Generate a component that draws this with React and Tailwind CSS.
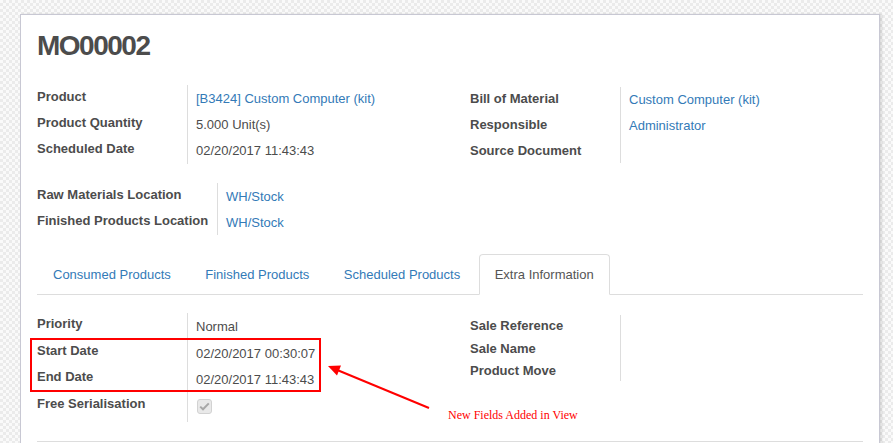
import React from "react";

const LBL = "font-bold text-[13px] leading-[18px] text-[#4c4c4c] whitespace-nowrap";
const VAL = "text-[13px] leading-[18px] text-[#4c4c4c] whitespace-nowrap";
const LINK = "text-[13px] leading-[18px] text-[#337ab7] whitespace-nowrap";

function Group({ labelW, colH, lpt, vpt, rows, className = "" }) {
  return (
    <div className={`flex ${colH} ${className}`}>
      <div className={`flex flex-col shrink-0 border-r border-[#dddddd] ${labelW} ${colH} ${lpt}`}>
        {rows.map((r, i) => (
          <div key={i} className={`shrink-0 ${r.h} ${LBL}`}>{r.label}</div>
        ))}
      </div>
      <div className={`flex flex-col pl-[8px] ${colH} ${vpt}`}>
        {rows.map((r, i) => (
          <div key={i} className={`shrink-0 ${r.h} ${r.cls || VAL}`}>{r.value}</div>
        ))}
      </div>
    </div>
  );
}

function Checkbox() {
  return (
    <div className="mt-[1px] ml-[1px] w-[15px] h-[15px] rounded-[3px] bg-[#e9e9e9] border border-[#d2d2d2] flex items-center justify-center">
      <svg width="11" height="9" viewBox="0 0 11 9">
        <path d="M1.2 4.6 L4 7.3 L9.8 1.4" fill="none" stroke="#a8a8a8" strokeWidth="2" />
      </svg>
    </div>
  );
}

function Tab({ children, active }) {
  return active ? (
    <div className="-mb-px h-[41px] px-[15px] mr-[2.5px] border border-[#dddddd] border-b-white bg-white rounded-t-[4px] flex items-center text-[13px] text-[#555555]">
      {children}
    </div>
  ) : (
    <div className="-mb-px h-[41px] px-[15px] mr-[2.5px] border border-transparent flex items-center text-[13px] text-[#337ab7]">
      {children}
    </div>
  );
}

export default function App() {
  return (
    <div
      className="relative h-[443px] w-[893px] overflow-hidden pt-[14px] pl-[20px] pr-[13px] bg-[#f7f7f7] bg-[image:repeating-conic-gradient(#ebebeb_0%_25%,#fafafa_0%_50%)] bg-[length:6px_6px]"
      style={{ fontFamily: '"Liberation Sans", Arial, sans-serif' }}
    >
      <div className="bg-white border border-[#c8c8d3] shadow-[2px_0_2px_rgba(0,0,0,0.12)] h-[600px] px-[16px] pt-[15px]">
        <h1 className="h-[32px] text-[28px] leading-[32px] font-bold tracking-[-1.5px] text-[#4c4c4c]">
          MO00002
        </h1>

        <div className="flex h-[79px] mt-[23px]">
          <div className="w-[433px]">
            <Group
              labelW="w-[151px]"
              colH="h-[79px]"
              lpt="pt-[3px]"
              vpt="pt-[5px]"
              rows={[
                { label: "Product", value: "[B3424] Custom Computer (kit)", cls: LINK, h: "h-[26px]" },
                { label: "Product Quantity", value: "5.000\u00a0Unit(s)", h: "h-[26px]" },
                { label: "Scheduled Date", value: "02/20/2017 11:43:43", h: "h-[26px]" },
              ]}
            />
          </div>
          <div className="flex-1 mt-[2px]">
            <Group
              labelW="w-[151px]"
              colH="h-[76px]"
              lpt="pt-[3px]"
              vpt="pt-[4px]"
              rows={[
                { label: "Bill of Material", value: "Custom Computer (kit)", cls: LINK, h: "h-[26px]" },
                { label: "Responsible", value: "Administrator", cls: LINK, h: "h-[26px]" },
                { label: "Source Document", value: "", h: "h-[26px]" },
              ]}
            />
          </div>
        </div>

        <Group
          className="mt-[19px]"
          labelW="w-[181px]"
          colH="h-[52px]"
          lpt="pt-[3px]"
          vpt="pt-[5px]"
          rows={[
            { label: "Raw Materials Location", value: "WH/Stock", cls: LINK, h: "h-[26px]" },
            { label: "Finished Products Location", value: "WH/Stock", cls: LINK, h: "h-[26px]" },
          ]}
        />

        <div className="mt-[19px] flex border-b border-[#dddddd] h-[41px]">
          <Tab>Consumed Products</Tab>
          <Tab>Finished Products</Tab>
          <Tab>Scheduled Products</Tab>
          <Tab active>Extra Information</Tab>
        </div>

        <div className="flex h-[109px] mt-[18px]">
          <div className="w-[433px]">
            <Group
              labelW="w-[151px]"
              colH="h-[109px]"
              lpt="pt-[2px]"
              vpt="pt-[5px]"
              rows={[
                { label: "Priority", value: "Normal", h: "h-[27px]" },
                { label: "Start Date", value: "02/20/2017 00:30:07", h: "h-[26px]" },
                { label: "End Date", value: "02/20/2017 11:43:43", h: "h-[27px]" },
                { label: "Free Serialisation", value: <Checkbox />, h: "h-[27px]" },
              ]}
            />
          </div>
          <div className="flex-1 mt-[2px]">
            <Group
              labelW="w-[151px]"
              colH="h-[66px]"
              lpt="pt-[2px]"
              vpt="pt-[2px]"
              rows={[
                { label: "Sale Reference", value: "", h: "h-[23px]" },
                { label: "Sale Name", value: "", h: "h-[22px]" },
                { label: "Product Move", value: "", h: "h-[22px]" },
              ]}
            />
          </div>
        </div>

        <div className="mt-[19px] border-t border-[#dddddd]" />
      </div>

      {/* annotation overlay */}
      <div className="absolute left-[30px] top-[338px] w-[291px] h-[54px] border-2 border-[#ff0000]" />
      <svg className="absolute left-0 top-0 pointer-events-none" width="893" height="443">
        <line x1="429" y1="408" x2="336" y2="369.5" stroke="#ff0000" strokeWidth="2" />
        <polygon points="328,366 341,365.6 337,375.4" fill="#ff0000" />
      </svg>
      <div
        className="absolute left-[448px] top-[407px] text-[12px] leading-[16px] text-[#ff0000] whitespace-nowrap"
        style={{ fontFamily: '"Liberation Serif", "Times New Roman", serif' }}
      >
        New Fields Added in View
      </div>
    </div>
  );
}
